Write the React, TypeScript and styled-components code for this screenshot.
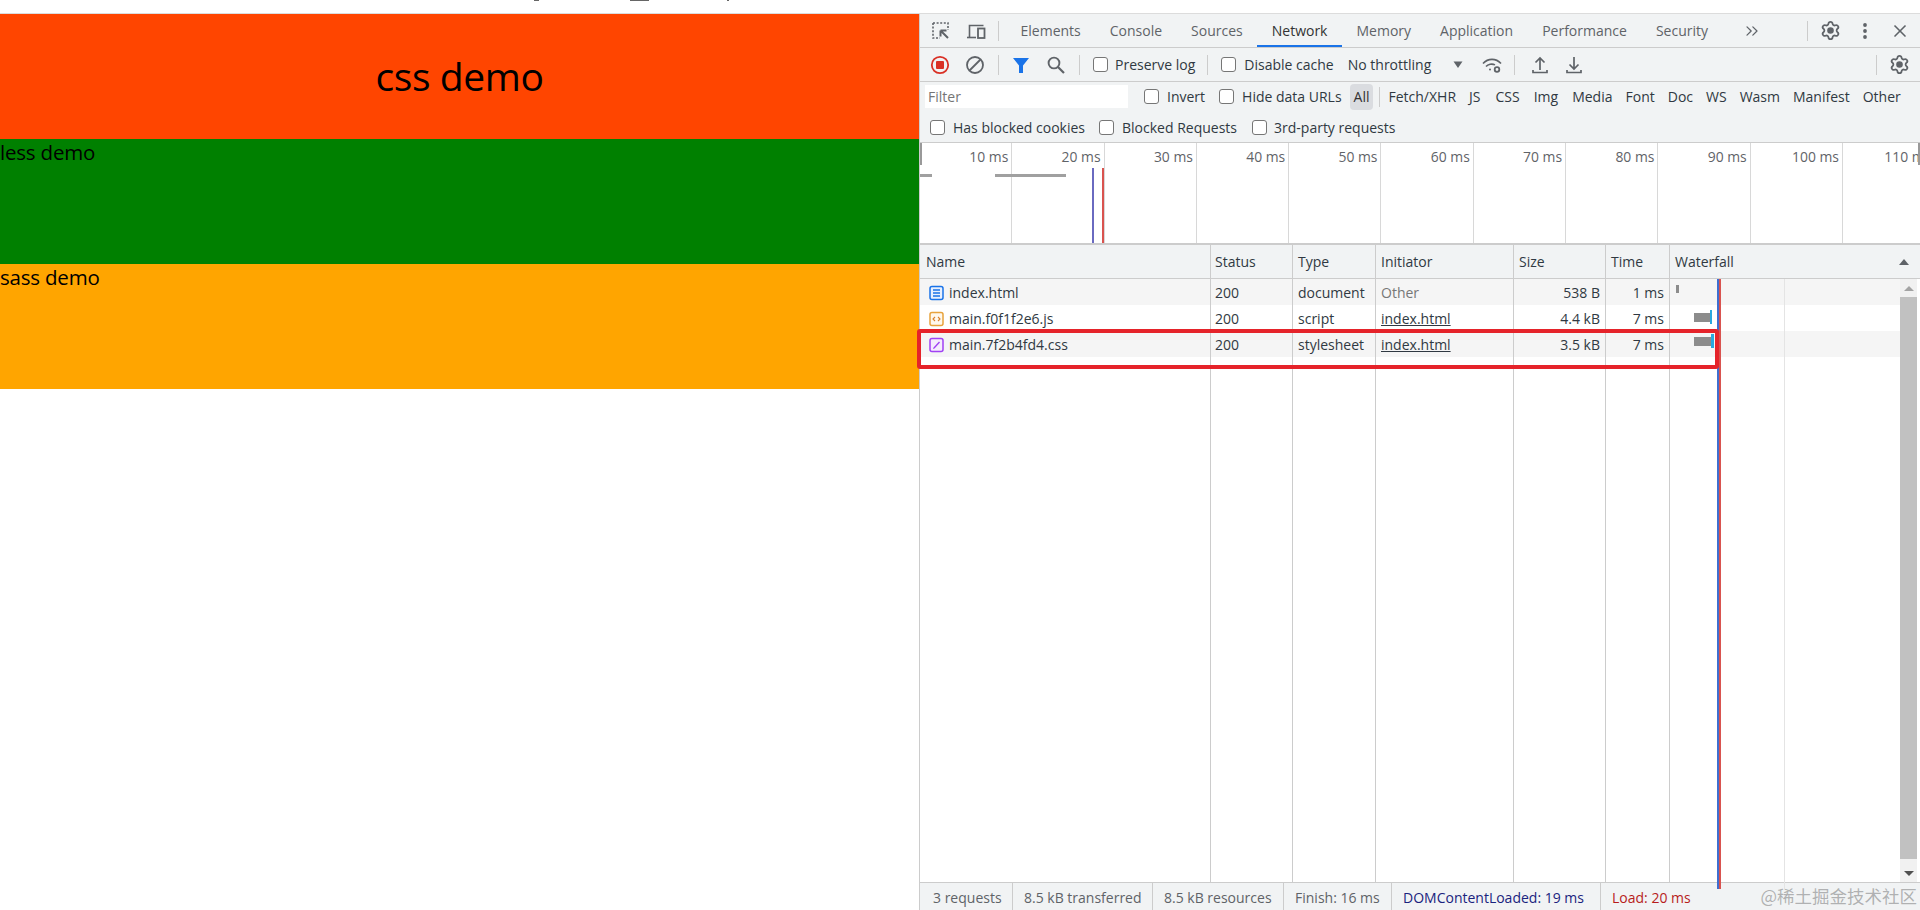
import React from "react";
import styled, { createGlobalStyle } from "styled-components";
import { X, ChevronsRight } from "lucide-react";

const Global = createGlobalStyle`
  html, body { margin: 0; padding: 0; background: #fff; }
  body { font-family: "Open Sans", "Liberation Sans", sans-serif; }
`;

const Page = styled.div`
  position: relative;
  width: 1920px;
  height: 910px;
  overflow: hidden;
  display: flex;
  flex-direction: column;
  background: #fff;
`;
const TopSliver = styled.div`
  height: 13px;
  border-bottom: 1px solid #dcdcdc;
  display: flex;
`;
const SliverMark = styled.span<{ $ml: number; $w: number }>`
  margin-left: ${(p) => p.$ml}px;
  width: ${(p) => p.$w}px;
  height: 1px;
  background: #666;
`;
const Main = styled.div`
  flex: 1;
  display: flex;
  min-height: 0;
`;
const Preview = styled.div`
  width: 919px;
  flex: none;
  display: flex;
  flex-direction: column;
`;
const DemoBlock = styled.div<{ $bg: string; $h: number }>`
  height: ${(p) => p.$h}px;
  background: ${(p) => p.$bg};
  color: #000;
  font-size: 20.5px;
  line-height: 26px;
  letter-spacing: -0.2px;
`;
const DemoTitle = styled(DemoBlock)`
  font-size: 39px;
  line-height: 124px;
  text-align: center;
  letter-spacing: -0.4px;
`;
const Devtools = styled.div`
  flex: 1;
  min-width: 0;
  display: flex;
  flex-direction: column;
  border-left: 1px solid #ccc;
  color: #303942;
  font-size: 14px;
`;
const Bar = styled.div<{ $h: number; $border?: boolean }>`
  height: ${(p) => p.$h}px;
  flex: none;
  display: flex;
  align-items: center;
  background: #f1f3f4;
  white-space: nowrap;
  border-bottom: ${(p) => (p.$border ? "1px solid #ccc" : "none")};
`;
const IconSlot = styled.span<{ $ml?: number; $w?: number }>`
  flex: none;
  display: inline-flex;
  align-items: center;
  justify-content: center;
  width: ${(p) => p.$w ?? 24}px;
  margin-left: ${(p) => p.$ml ?? 0}px;
  color: #5f6368;
`;
const VSep = styled.span<{ $ml: number; $h?: number }>`
  flex: none;
  width: 1px;
  height: ${(p) => p.$h ?? 20}px;
  background: #ccc;
  margin-left: ${(p) => p.$ml}px;
`;
const Tab = styled.div<{ $active?: boolean }>`
  height: 33px;
  line-height: 33px;
  padding: 0 14.5px;
  box-sizing: border-box;
  color: ${(p) => (p.$active ? "#333" : "#5f6368")};
  border-bottom: 2px solid ${(p) => (p.$active ? "#1a73e8" : "transparent")};
`;
const Box = styled.span<{ $ml?: number }>`
  flex: none;
  display: inline-block;
  width: 13px;
  height: 13px;
  margin-left: ${(p) => p.$ml ?? 0}px;
  border: 1px solid #767676;
  border-radius: 3px;
  background: #fff;
`;
const Label = styled.span<{ $ml?: number }>`
  margin-left: ${(p) => p.$ml ?? 0}px;
`;
const FilterRow = styled(Bar)<{ $pb: number }>`
  padding-bottom: ${(p) => p.$pb}px;
  box-sizing: border-box;
`;
const FilterInput = styled.div`
  width: 200px;
  height: 23px;
  line-height: 23px;
  margin-left: 5px;
  padding-left: 3px;
  background: #fff;
  color: #757575;
  flex: none;
`;
const Pill = styled.span`
  margin-left: 8px;
  padding: 0 4px;
  height: 26px;
  line-height: 26px;
  border-radius: 4px;
  background: #dadce0;
  color: #333;
`;
const TypeChip = styled.span<{ $ml: number }>`
  margin-left: ${(p) => p.$ml}px;
  color: #303942;
`;
const Overview = styled.div`
  position: relative;
  flex: none;
  height: 100px;
  border-top: 1px solid #ccc;
  border-bottom: 2px solid #ccc;
  display: grid;
  grid-template-columns: repeat(11, 92.3px);
  overflow: hidden;
  background: #fff;
`;
const Tick = styled.div`
  box-sizing: border-box;
  border-right: 1px solid #d8d8d8;
  padding: 4px 3px 0 0;
  text-align: right;
  color: #5f6368;
  font-size: 13.9px;
  line-height: 20px;
  white-space: nowrap;
`;
const Mark = styled.span<{ $x: number; $y: number; $w: number; $h: number; $c: string }>`
  position: absolute;
  left: ${(p) => p.$x}px;
  top: ${(p) => p.$y}px;
  width: ${(p) => p.$w}px;
  height: ${(p) => p.$h}px;
  background: ${(p) => p.$c};
`;
const cols = "291px 82px 83px 138px 92px 64px 1fr";
const HeadRow = styled.div`
  flex: none;
  height: 33px;
  display: grid;
  grid-template-columns: ${cols};
  background: #f1f3f4;
  border-bottom: 1px solid #ccc;
`;
const HeadCell = styled.div<{ $last?: boolean; $pl?: number }>`
  display: flex;
  align-items: center;
  justify-content: space-between;
  padding: 0 11px 0 ${(p) => p.$pl ?? 5}px;
  border-right: ${(p) => (p.$last ? "none" : "1px solid #ccc")};
  color: #303942;
`;
const Body = styled.div`
  position: relative;
  flex: 1;
  min-height: 0;
  display: flex;
  background: #fff;
`;
const Table = styled.div`
  flex: 1;
  min-width: 0;
  display: flex;
  flex-direction: column;
`;
const Row = styled.div<{ $striped?: boolean }>`
  flex: none;
  height: 26px;
  display: grid;
  grid-template-columns: ${cols};
  background: ${(p) => (p.$striped ? "#f5f5f5" : "#fff")};
`;
const Filler = styled.div`
  flex: 1;
  display: grid;
  grid-template-columns: ${cols};
`;
const Cell = styled.div<{ $right?: boolean; $muted?: boolean; $link?: boolean; $pl?: number }>`
  display: flex;
  align-items: center;
  justify-content: ${(p) => (p.$right ? "flex-end" : "flex-start")};
  padding: 1px 5px 0 ${(p) => p.$pl ?? 5}px;
  border-right: 1px solid #ccc;
  color: ${(p) => (p.$muted ? "#777" : "#303942")};
  text-decoration: ${(p) => (p.$link ? "underline" : "none")};
  white-space: nowrap;
  min-width: 0;
`;
const NameCell = styled(Cell)`
  padding-left: 9px;
  gap: 5px;
`;
const LastCell = styled.div`
  display: flex;
  align-items: center;
  min-width: 0;
`;
const WfBar = styled.span<{ $ml: number; $w: number; $h: number; $c: string; $shift?: number }>`
  flex: none;
  margin-left: ${(p) => p.$ml}px;
  width: ${(p) => p.$w}px;
  height: ${(p) => p.$h}px;
  background: ${(p) => p.$c};
  transform: translateY(${(p) => p.$shift ?? -1}px);
`;
const Scroller = styled.div`
  flex: none;
  width: 17px;
  margin-right: 3px;
  display: flex;
  flex-direction: column;
  align-items: center;
  background: #f1f1f1;
`;
const Arrow = styled.span<{ $down?: boolean }>`
  flex: none;
  width: 0;
  height: 0;
  margin: 7px 0 6px;
  border-left: 5px solid transparent;
  border-right: 5px solid transparent;
  ${(p) => (p.$down ? "border-top: 5px solid #505050;" : "border-bottom: 5px solid #a3a3a3;")}
`;
const Thumb = styled.div`
  flex: 1;
  width: 100%;
  margin-bottom: 5px;
  background: #c1c1c1;
`;
const SortTri = styled.span`
  width: 0;
  height: 0;
  border-left: 5px solid transparent;
  border-right: 5px solid transparent;
  border-bottom: 6px solid #5f6368;
`;
const StatusBar = styled.div`
  flex: none;
  height: 27px;
  display: flex;
  align-items: center;
  border-top: 1px solid #ccc;
  background: #f1f3f4;
  padding-left: 13px;
  white-space: nowrap;
`;
const StatusItem = styled.span<{ $w: number; $c?: string; $sep?: boolean }>`
  flex: none;
  box-sizing: border-box;
  width: ${(p) => p.$w}px;
  height: 27px;
  line-height: 29px;
  color: ${(p) => p.$c ?? "#5f6368"};
  border-right: ${(p) => (p.$sep === false ? "none" : "1px solid #ccc")};
  & + & { padding-left: 11px; }
`;
const RedBox = styled.div`
  position: absolute;
  left: 917px;
  top: 329px;
  width: 802px;
  height: 40px;
  box-sizing: border-box;
  border: 4px solid #e5232a;
  border-radius: 3px;
`;
const Watermark = styled.div`
  position: absolute;
  right: 3px;
  bottom: 2px;
  font-family: "Noto Sans CJK SC", sans-serif;
  font-size: 17.5px;
  line-height: 24px;
  color: rgba(120, 120, 120, 0.55);
`;

const I = ({ w = 20, h = 20, children }: { w?: number; h?: number; children: React.ReactNode }) => (
  <svg width={w} height={h} viewBox={`0 0 ${w} ${h}`} fill="none">{children}</svg>
);
const InspectIcon = () => (
  <I>
    <path d="M2 2h15v7M2 2v15h7" stroke="#5f6368" strokeWidth="1.6" strokeDasharray="2 1.6" />
    <path d="M9.500 9.500 17 17M9.500 9.500h6M9.500 9.500v6" stroke="#5f6368" strokeWidth="2" />
  </I>
);
const DeviceIcon = () => (
  <I>
    <path d="M3.500 16V4.500h14" stroke="#5f6368" strokeWidth="1.6" />
    <path d="M1 16.500h9" stroke="#5f6368" strokeWidth="1.6" />
    <rect x="12" y="7.500" width="6.500" height="9.500" stroke="#5f6368" strokeWidth="1.8" />
  </I>
);
const RecordIcon = () => (
  <I>
    <circle cx="10" cy="10" r="8.200" stroke="#d93025" strokeWidth="1.8" />
    <rect x="6" y="6" width="8" height="8" rx="1" fill="#d93025" />
  </I>
);
const ClearIcon = () => (
  <I>
    <circle cx="10" cy="10" r="8" stroke="#5f6368" strokeWidth="1.8" />
    <path d="M4.500 15.500 15.500 4.500" stroke="#5f6368" strokeWidth="1.8" />
  </I>
);
const FunnelIcon = () => (
  <I>
    <path d="M2 3h16l-6 7.500V18h-4v-7.500z" fill="#1a73e8" />
  </I>
);
const SearchIcon = () => (
  <I>
    <circle cx="8" cy="8" r="5.400" stroke="#5f6368" strokeWidth="1.9" />
    <path d="m12 12 6 6" stroke="#5f6368" strokeWidth="2.2" />
  </I>
);
const WifiGearIcon = () => (
  <I>
    <path d="M1 8.500C6 3 14 3 19 8.500" stroke="#5f6368" strokeWidth="1.6" />
    <path d="M4 11.500c2-2.200 6-3.200 9-1.600" stroke="#5f6368" strokeWidth="1.6" />
    <circle cx="8" cy="14.500" r="1" fill="#5f6368" />
    <circle cx="15" cy="14.500" r="2.300" stroke="#5f6368" strokeWidth="1.8" />
  </I>
);
const UploadIcon = () => (
  <I>
    <path d="M10 15V3M5.500 7.500 10 3l4.500 4.500" stroke="#5f6368" strokeWidth="1.7" />
    <path d="M3 15v2.500h14V15" stroke="#5f6368" strokeWidth="1.7" />
  </I>
);
const DownloadIcon = () => (
  <I>
    <path d="M10 2v12M5.500 9.500 10 14l4.500-4.500" stroke="#5f6368" strokeWidth="1.7" />
    <path d="M3 15v2.500h14V15" stroke="#5f6368" strokeWidth="1.7" />
  </I>
);
const CaretIcon = () => (
  <I w={12} h={10}>
    <path d="M1.500 1.500h9L6 8z" fill="#5f6368" />
  </I>
);
const DotsIcon = () => (
  <I w={6} h={18}>
    <circle cx="3" cy="3" r="1.900" fill="#5f6368" />
    <circle cx="3" cy="9" r="1.900" fill="#5f6368" />
    <circle cx="3" cy="15" r="1.900" fill="#5f6368" />
  </I>
);
const GearIcon = () => (
  <svg width="21" height="21" viewBox="0 0 24 24" fill="none" stroke="#5f6368" strokeWidth="2">
    <path d="M9.671 4.136a2.34 2.34 0 0 1 4.659 0 2.34 2.34 0 0 0 3.319 1.915 2.34 2.34 0 0 1 2.33 4.033 2.34 2.34 0 0 0 0 3.831 2.34 2.34 0 0 1-2.33 4.033 2.34 2.34 0 0 0-3.319 1.915 2.34 2.34 0 0 1-4.659 0 2.34 2.34 0 0 0-3.32-1.915 2.34 2.34 0 0 1-2.33-4.033 2.34 2.34 0 0 0 0-3.831A2.34 2.34 0 0 1 6.35 6.051a2.34 2.34 0 0 0 3.32-1.915" />
    <circle cx="12" cy="12" r="2.800" fill="#5f6368" />
  </svg>
);
const DocIcon = () => (
  <I w={15} h={16}>
    <rect x="1" y="1.500" width="13" height="13" rx="2" stroke="#1a73e8" strokeWidth="1.500" fill="#e8f0fe" />
    <path d="M4 5h7M4 8h7M4 11h7" stroke="#1a73e8" strokeWidth="1.400" />
  </I>
);
const ScriptIcon = () => (
  <I w={15} h={16}>
    <rect x="1" y="1.500" width="13" height="13" rx="2" stroke="#e8a33d" strokeWidth="1.500" fill="#fff8ec" />
    <path d="M6 6 4 8l2 2M9 6l2 2-2 2" stroke="#d9822b" strokeWidth="1.100" />
  </I>
);
const CssIcon = () => (
  <I w={15} h={16}>
    <rect x="1" y="1.500" width="13" height="13" rx="2" stroke="#a142f4" strokeWidth="1.500" fill="#f6edfd" />
    <path d="m4 12 1.500-.5L11 5.500 10 4.500 4.500 10.500z" fill="#a142f4" />
  </I>
);

const tabs = ["Elements", "Console", "Sources", "Network", "Memory", "Application", "Performance", "Security"];
const ticks = ["10 ms", "20 ms", "30 ms", "40 ms", "50 ms", "60 ms", "70 ms", "80 ms", "90 ms", "100 ms", "110 ms"];
const chips: [string, number][] = [
  ["Fetch/XHR", 8], ["JS", 13], ["CSS", 15], ["Img", 14], ["Media", 14], ["Font", 13],
  ["Doc", 13], ["WS", 13], ["Wasm", 13], ["Manifest", 13], ["Other", 13],
];
const heads: [string, number][] = [["Name", 6], ["Status", 4], ["Type", 5], ["Initiator", 5], ["Size", 5], ["Time", 5]];
const rows = [
  { icon: <DocIcon />, name: "index.html", type: "document", init: "Other", size: "538 B", time: "1 ms", bars: [{ ml: 6, w: 3, h: 8, c: "#8c8c8c", s: -3 }] },
  { icon: <ScriptIcon />, name: "main.f0f1f2e6.js", type: "script", init: "index.html", size: "4.4 kB", time: "7 ms", bars: [{ ml: 24, w: 16, h: 9, c: "#8c8c8c", s: -1 }, { ml: 0, w: 2, h: 14, c: "#2aa9e0", s: -1 }] },
  { icon: <CssIcon />, name: "main.7f2b4fd4.css", type: "stylesheet", init: "index.html", size: "3.5 kB", time: "7 ms", bars: [{ ml: 24, w: 17, h: 9, c: "#8c8c8c", s: -3 }, { ml: 0, w: 3, h: 14, c: "#2aa9e0", s: -3 }] },
];

export default function App() {
  return (
    <Page>
      <Global />
      <TopSliver>
        <SliverMark $ml={534} $w={5} />
        <SliverMark $ml={91} $w={19} />
        <SliverMark $ml={78} $w={2} />
      </TopSliver>
      <Main>
        <Preview>
          <DemoTitle $bg="#ff4500" $h={125}>css demo</DemoTitle>
          <DemoBlock $bg="#008000" $h={125}>less demo</DemoBlock>
          <DemoBlock $bg="#ffa500" $h={125}>sass demo</DemoBlock>
        </Preview>
        <Devtools>
          <Bar $h={33} $border>
            <IconSlot $ml={9}><InspectIcon /></IconSlot>
            <IconSlot $ml={11}><DeviceIcon /></IconSlot>
            <VSep $ml={10} />
            <IconSlot $w={0} $ml={7} />
            {tabs.map((t) => (
              <Tab key={t} $active={t === "Network"}>{t}</Tab>
            ))}
            <IconSlot $ml={19} $w={20}><ChevronsRight size={20} strokeWidth={1.5} /></IconSlot>
            <VSep $ml={45} />
            <IconSlot $ml={11}><GearIcon /></IconSlot>
            <IconSlot $ml={10}><DotsIcon /></IconSlot>
            <IconSlot $ml={11}><X size={20} strokeWidth={2} /></IconSlot>
          </Bar>
          <Bar $h={33} $border>
            <IconSlot $ml={8}><RecordIcon /></IconSlot>
            <IconSlot $ml={11}><ClearIcon /></IconSlot>
            <VSep $ml={11} />
            <IconSlot $ml={10}><FunnelIcon /></IconSlot>
            <IconSlot $ml={11}><SearchIcon /></IconSlot>
            <VSep $ml={11} />
            <Box $ml={13} />
            <Label $ml={7}>Preserve log</Label>
            <VSep $ml={12} />
            <Box $ml={13} />
            <Label $ml={8}>Disable cache</Label>
            <Label $ml={14}>No throttling</Label>
            <IconSlot $ml={15} $w={24}><CaretIcon /></IconSlot>
            <IconSlot $ml={10}><WifiGearIcon /></IconSlot>
            <VSep $ml={10} />
            <IconSlot $ml={13}><UploadIcon /></IconSlot>
            <IconSlot $ml={10}><DownloadIcon /></IconSlot>
            <VSep $ml={290} />
            <IconSlot $ml={10}><GearIcon /></IconSlot>
          </Bar>
          <FilterRow $h={33} $pb={4}>
            <FilterInput>Filter</FilterInput>
            <Box $ml={16} />
            <Label $ml={8}>Invert</Label>
            <Box $ml={14} />
            <Label $ml={8}>Hide data URLs</Label>
            <Pill>All</Pill>
            <VSep $ml={6} />
            {chips.map(([c, ml]) => (
              <TypeChip key={c} $ml={ml}>{c}</TypeChip>
            ))}
          </FilterRow>
          <FilterRow $h={27} $pb={2}>
            <Box $ml={10} />
            <Label $ml={8}>Has blocked cookies</Label>
            <Box $ml={14} />
            <Label $ml={8}>Blocked Requests</Label>
            <Box $ml={15} />
            <Label $ml={7}>3rd-party requests</Label>
          </FilterRow>
          <Overview>
            {ticks.map((t) => <Tick key={t}>{t}</Tick>)}
            <Mark $x={0} $y={0} $w={2} $h={22} $c="#999" />
            <Mark $x={998} $y={0} $w={2} $h={22} $c="#999" />
            <Mark $x={0} $y={31} $w={12} $h={3} $c="#a0a0a0" />
            <Mark $x={75} $y={31} $w={71} $h={3} $c="#a0a0a0" />
            <Mark $x={172} $y={25} $w={2} $h={76} $c="#6a6ac0" />
            <Mark $x={182} $y={25} $w={2} $h={76} $c="#d9534f" />
          </Overview>
          <HeadRow>
            {heads.map(([h, pl]) => <HeadCell key={h} $pl={pl}>{h}</HeadCell>)}
            <HeadCell $last>Waterfall<SortTri /></HeadCell>
          </HeadRow>
          <Body>
            <Table>
              {rows.map((r, i) => (
                <Row key={r.name} $striped={i % 2 === 0}>
                  <NameCell>{r.icon}{r.name}</NameCell>
                  <Cell $pl={4}>200</Cell>
                  <Cell>{r.type}</Cell>
                  <Cell $link={r.init !== "Other"} $muted={r.init === "Other"}>{r.init}</Cell>
                  <Cell $right>{r.size}</Cell>
                  <Cell $right>{r.time}</Cell>
                  <LastCell>
                    {r.bars.map((b, j) => (
                      <WfBar key={j} $ml={b.ml} $w={b.w} $h={b.h} $c={b.c} $shift={b.s} />
                    ))}
                  </LastCell>
                </Row>
              ))}
              <Filler>
                <Cell /><Cell /><Cell /><Cell /><Cell /><Cell /><LastCell />
              </Filler>
            </Table>
            <Mark $x={797} $y={0} $w={2} $h={610} $c="#3f6fd0" />
            <Mark $x={799} $y={0} $w={2} $h={610} $c="#d9534f" />
            <Mark $x={864} $y={0} $w={1} $h={610} $c="#e4e4e4" />
            <Scroller>
              <Arrow />
              <Thumb />
              <Arrow $down />
            </Scroller>
          </Body>
          <StatusBar>
            <StatusItem $w={80}>3 requests</StatusItem>
            <StatusItem $w={140}>8.5 kB transferred</StatusItem>
            <StatusItem $w={131}>8.5 kB resources</StatusItem>
            <StatusItem $w={108}>Finish: 16 ms</StatusItem>
            <StatusItem $w={209} $c="#1a237e">DOMContentLoaded: 19 ms</StatusItem>
            <StatusItem $w={110} $c="#b71c1c" $sep={false}>Load: 20 ms</StatusItem>
          </StatusBar>
        </Devtools>
      </Main>
      <RedBox />
      <Watermark>@稀土掘金技术社区</Watermark>
    </Page>
  );
}
